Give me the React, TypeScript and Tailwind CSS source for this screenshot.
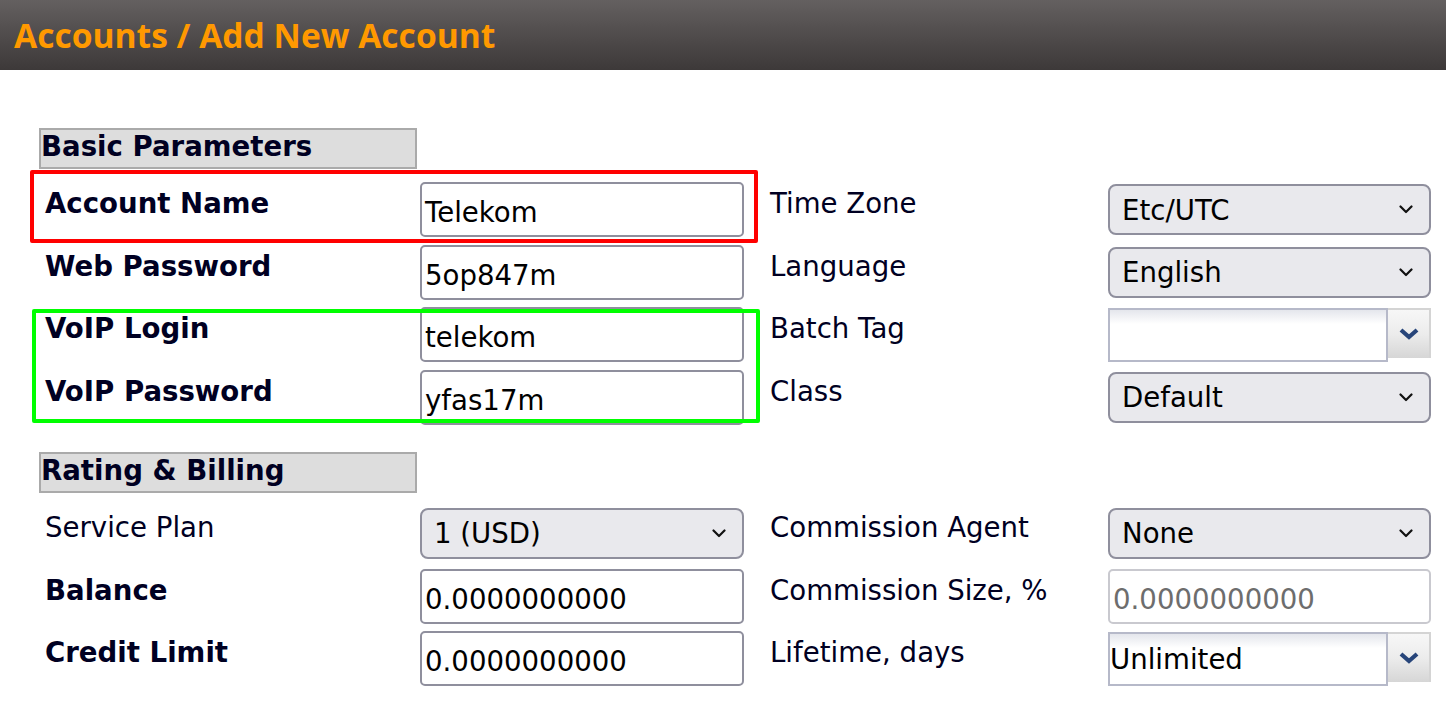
import React from "react";

const FONT = { fontFamily: '"DejaVu Sans", Verdana, sans-serif' };

function Label({ children, bold }: { children: React.ReactNode; bold?: boolean }) {
  return (
    <div className={`pt-[6px] text-[27.6px] leading-[31px] text-[#000022] whitespace-nowrap ${bold ? "font-bold" : ""}`}>
      {children}
    </div>
  );
}

function TextInput({ value, disabled }: { value: string; disabled?: boolean }) {
  return (
    <div
      className={`h-[55px] w-[324px] rounded-[5px] border-2 bg-white pl-[3px] pt-[6px] flex items-center text-[27.6px] leading-[31px] whitespace-nowrap ${
        disabled ? "border-[#c9c9cf] text-[#6d6d6d]" : "border-[#8f8f9d] text-[#000000]"
      }`}
    >
      {value}
    </div>
  );
}

function Chevron() {
  return (
    <svg width="14" height="9" viewBox="0 0 14 9" className="shrink-0">
      <path d="M1.5 1.5 L7 7 L12.5 1.5" fill="none" stroke="#111" strokeWidth="2.2" strokeLinecap="round" strokeLinejoin="round" />
    </svg>
  );
}

function Select({ value, width = 323 }: { value: string; width?: number }) {
  return (
    <div
      className="h-[51px] rounded-[8px] border-2 border-[#8f8f9d] bg-[#e9e9ed] pl-[12px] pr-[16px] flex items-center justify-between text-[27.6px] leading-[31px] text-[#000000] whitespace-nowrap"
      style={{ width }}
    >
      <span className="pt-[1px]">{value}</span>
      <Chevron />
    </div>
  );
}

function Combo({ value }: { value: string }) {
  return (
    <div className="flex items-start h-[55px] pt-[1px]">
      <div className="relative h-[54px] w-[280px] border-2 border-[#b6b9c9] bg-white flex items-center text-[27.6px] leading-[31px] text-[#000000] whitespace-nowrap">
        <div className="absolute inset-x-0 top-0 h-[14px] bg-gradient-to-b from-[#e4e6ec] to-white" />
        <span className="relative pt-[1px]">{value}</span>
      </div>
      <div className="h-[50px] w-[43px] border-t-2 border-r-2 border-[#d4d4d4] bg-gradient-to-b from-[#f7f7f7] via-[#ececec] to-[#d6d6d6] flex items-center justify-center">
        <svg width="22" height="14" viewBox="0 0 22 14">
          <path d="M3 3 L11 10 L19 3" fill="none" stroke="#27457a" strokeWidth="4.2" strokeLinejoin="miter" />
        </svg>
      </div>
    </div>
  );
}

function SectionHeader({ title }: { title: string }) {
  return (
    <div className="h-[41px] w-[378px] border-2 border-[#aaaaaa] bg-[#dddddd] pt-[1px] text-[27.6px] leading-[31px] font-bold text-[#000022] whitespace-nowrap">
      {title}
    </div>
  );
}

function Row({ children }: { children: React.ReactNode }) {
  return <div className="grid grid-cols-[381px_350px_338px_323px] h-[55px]">{children}</div>;
}

export default function App() {
  return (
    <div className="relative w-[1446px] h-[701px] overflow-hidden bg-white" style={FONT}>
      <div className="h-[70px] bg-gradient-to-b from-[#646060] to-[#3d3939] pl-[14px] flex items-center">
        <span
          className="text-[33.6px] font-bold text-[#ff9900] leading-none pt-[1px] whitespace-nowrap"
          style={{ fontFamily: '"Open Sans", sans-serif' }}
        >
          Accounts / Add New Account
        </span>
      </div>

      <div className="pl-[39px] pt-[58px]">
        <SectionHeader title="Basic Parameters" />
        <div className="mt-[13px] flex flex-col gap-y-[7.67px]">
          <Row>
            <div className="pl-[6px]"><Label bold>Account Name</Label></div>
            <TextInput value="Telekom" />
            <Label>Time Zone</Label>
            <div className="flex items-center"><Select value="Etc/UTC" /></div>
          </Row>
          <Row>
            <div className="pl-[6px]"><Label bold>Web Password</Label></div>
            <TextInput value="5op847m" />
            <Label>Language</Label>
            <div className="flex items-center"><Select value="English" /></div>
          </Row>
          <Row>
            <div className="pl-[6px]"><Label bold>VoIP Login</Label></div>
            <TextInput value="telekom" />
            <Label>Batch Tag</Label>
            <Combo value="" />
          </Row>
          <Row>
            <div className="pl-[6px]"><Label bold>VoIP Password</Label></div>
            <TextInput value="yfas17m" />
            <Label>Class</Label>
            <div className="flex items-center"><Select value="Default" /></div>
          </Row>
        </div>

        <div className="mt-[27px]">
          <SectionHeader title="Rating & Billing" />
        </div>
        <div className="mt-[13px] flex flex-col gap-y-[7.67px]">
          <Row>
            <div className="pl-[6px]"><Label>Service Plan</Label></div>
            <div className="flex items-center"><Select value="1 (USD)" width={324} /></div>
            <Label>Commission Agent</Label>
            <div className="flex items-center"><Select value="None" /></div>
          </Row>
          <Row>
            <div className="pl-[6px]"><Label bold>Balance</Label></div>
            <TextInput value="0.0000000000" />
            <Label>Commission Size, %</Label>
            <div className="w-[323px] [&>div]:w-[323px]"><TextInput value="0.0000000000" disabled /></div>
          </Row>
          <Row>
            <div className="pl-[6px]"><Label bold>Credit Limit</Label></div>
            <TextInput value="0.0000000000" />
            <Label>Lifetime, days</Label>
            <Combo value="Unlimited" />
          </Row>
        </div>
      </div>

      {/* annotation overlays */}
      <div className="absolute left-[30px] top-[170px] w-[728px] h-[73px] border-4 border-[#ff0000] rounded-[2px] pointer-events-none" />
      <div className="absolute left-[32px] top-[309px] w-[728px] h-[114px] border-4 border-[#00ff00] rounded-[2px] pointer-events-none" />
    </div>
  );
}
